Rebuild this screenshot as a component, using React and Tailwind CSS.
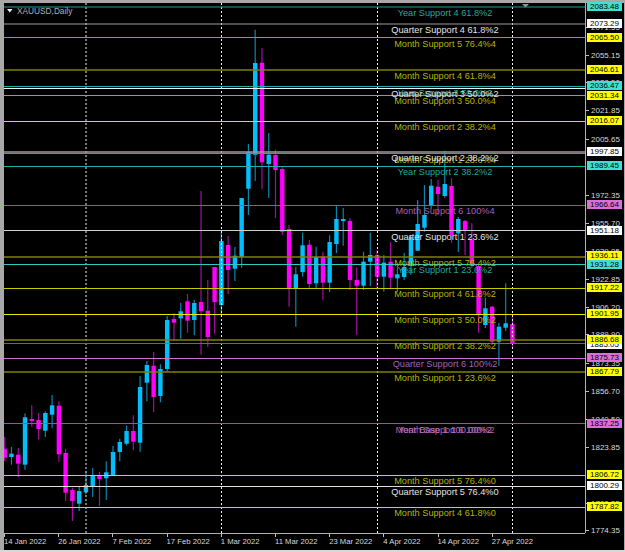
const CANDLES = [
  // body top, body bottom, wick top, wick bottom, rising
  [448.7, 457.7, 437, 461.3, 0],
  [453.7, 457, 447, 464.7, 1],
  [454.7, 463.7, 448, 477.3, 0],
  [417.3, 464.7, 413.3, 469.7, 1],
  [419, 421, 405.3, 426.7, 0],
  [420, 429, 413, 439.3, 0],
  [413, 430.7, 411.3, 437, 1],
  [405.3, 414.7, 395, 428.3, 1],
  [405.7, 454.3, 401.3, 461.7, 0],
  [453, 492.7, 448.7, 500.7, 0],
  [490, 501, 487.7, 521, 0],
  [491, 503.7, 486.7, 511, 1],
  [485, 492.3, 471, 494.3, 1],
  [475.3, 486, 468, 497, 1],
  [475.3, 479, 471.7, 506, 0],
  [472.3, 478.3, 461.3, 500, 1],
  [452, 475.3, 446, 475.3, 1],
  [442, 452, 438.7, 461.3, 1],
  [431, 443.7, 425.7, 445.3, 1],
  [431, 441.7, 415.3, 450.3, 0],
  [387, 442.7, 376, 451.7, 1],
  [365, 382.7, 361, 401.3, 1],
  [365.7, 397, 352, 412, 0],
  [369, 396, 364.3, 402.3, 1],
  [320, 369, 316, 371.7, 1],
  [319, 322.7, 313.3, 340.7, 0],
  [311.3, 318.3, 303, 338.7, 1],
  [301.3, 320.7, 294, 332.7, 0],
  [303, 320, 299.7, 335.3, 1],
  [302, 311.3, 191, 354.7, 0],
  [310.7, 337, 280, 347, 0],
  [267, 302, 267, 333.7, 0],
  [241, 305, 231.7, 315, 1],
  [245, 270, 236, 294, 0],
  [255.7, 268.7, 247, 281, 1],
  [198, 257, 198, 267.7, 1],
  [152, 188.7, 144, 215, 1],
  [63, 154.7, 29.7, 181, 1],
  [62.7, 162.3, 48, 189, 0],
  [154.7, 164, 133, 198, 1],
  [155, 170, 149.7, 218, 0],
  [169, 231.7, 166.7, 235, 0],
  [229, 288, 225, 306.7, 0],
  [274.3, 288, 267, 326.7, 1],
  [245.3, 272, 232.7, 276.7, 1],
  [244.7, 284, 240, 288, 0],
  [257, 283.3, 246.7, 289, 1],
  [256.7, 282.7, 252, 300, 0],
  [242, 282.7, 235.3, 292, 1],
  [219, 244, 206, 253, 1],
  [219, 221, 208, 245.7, 1],
  [221, 280, 218, 290, 0],
  [280, 285.7, 267.3, 335, 0],
  [261.7, 285.7, 251.7, 290, 1],
  [255, 261.7, 232.7, 286, 1],
  [255, 276.7, 250, 289.3, 0],
  [262.7, 276.7, 255, 291.7, 1],
  [261.7, 277.7, 242.3, 289.3, 0],
  [274.3, 278.3, 265, 292, 1],
  [267, 277, 253, 280, 1],
  [237, 266, 235, 275, 1],
  [224, 250.7, 200, 250.7, 1],
  [215, 227.7, 185, 231.7, 1],
  [185.7, 205, 179, 209, 1],
  [186.7, 194, 180, 215, 0],
  [184, 196, 150.7, 198, 1],
  [186, 235, 178.3, 243, 0],
  [219, 233.3, 217, 252, 1],
  [221, 230.7, 220, 255, 0],
  [240, 266, 223.3, 268, 0],
  [266, 315, 265, 332.7, 0],
  [308.3, 325, 297.7, 328, 1],
  [306.7, 341.7, 306, 343, 0],
  [326.7, 341.7, 322.7, 365.7, 1],
  [323.3, 327.7, 283.3, 331, 1],
  [324, 343.3, 317.3, 347, 0],
];

const LINES = [
  [7, "#1f9d95"],
  [24, "#9a9a9a"],
  [37.5, "#a0a000"],
  [70, "#808000", 1.5],
  [86.5, "#20b2aa"],
  [88.5, "#f0f0f0"],
  [95.5, "#a8a800"],
  [121.5, "#e0e000"],
  [152, "#9a9a9a", 1.5],
  [153.5, "#909000"],
  [166.5, "#20b2aa"],
  [205.5, "#a050a0"],
  [230.5, "#cfcfcf"],
  [257, "#808000", 1.5],
  [264.5, "#30c8c0"],
  [288.5, "#c8c800"],
  [314.5, "#e8e800"],
  [340, "#808000", 1.5],
  [343.5, "#6a6a6a"],
  [358.5, "#d070d0"],
  [372, "#808000", 1.5],
  [423.5, "#a050a0"],
  [475.5, "#d8d800"],
  [486.5, "#dcdcdc"],
  [507.5, "#d8d800"],
];

const YELLOW = "#b4b400";
const WHITE = "#e4e4e4";
const TEAL = "#22a89f";
const ORCHID = "#a860b0";

const CHART_TEXT = [
  ["Year Support 4 61.8%2", 12.7, TEAL],
  ["Quarter Support 4 61.8%2", 29.3, WHITE],
  ["Month Support 5 76.4%4", 43.3, YELLOW],
  ["Month Support 4 61.8%4", 75.7, YELLOW],
  ["Year Support 3 50.0%2", 92.3, TEAL],
  ["Quarter Support 3 50.0%2", 94, WHITE],
  ["Month Support 3 50.0%4", 100.7, YELLOW],
  ["Month Support 2 38.2%4", 127, YELLOW],
  ["Month Support 1 23.6%4", 159.7, YELLOW],
  ["Quarter Support 2 38.2%2", 157.3, WHITE],
  ["Year Support 2 38.2%2", 172, TEAL],
  ["Month Support 6 100%4", 210.7, ORCHID],
  ["Quarter Support 1 23.6%2", 236.3, WHITE],
  ["Month Support 5 76.4%2", 262.3, YELLOW],
  ["Year Support 1 23.6%2", 270, TEAL],
  ["Month Support 4 61.8%2", 293.7, YELLOW],
  ["Month Support 3 50.0%2", 319.7, YELLOW],
  ["Month Support 2 38.2%2", 345.3, YELLOW],
  ["Quarter Support 6 100%2", 364, ORCHID],
  ["Month Support 1 23.6%2", 377.7, YELLOW],
  ["Month Support 6 100%2", 429.3, ORCHID],
  ["Year Base 1 100.00%2", 429.3, "#c070c0"],
  ["Month Support 5 76.4%0", 480.7, YELLOW],
  ["Quarter Support 5 76.4%0", 491.7, WHITE],
  ["Month Support 4 61.8%0", 513, YELLOW],
];

const SCALE = [
  ["2071.55", 27],
  ["2055.15", 55.3],
  ["2038.50", 82],
  ["2021.85", 110.7],
  ["2005.65", 139],
  ["1972.35", 195],
  ["1955.70", 223],
  ["1939.05", 251],
  ["1922.85", 279],
  ["1906.20", 307],
  ["1889.90", 334.5],
  ["1873.35", 363],
  ["1856.70", 391],
  ["1840.50", 419],
  ["1823.85", 447],
  ["1790.55", 503],
  ["1774.35", 530],
];

const TAGS = [
  ["2083.48", 6.7, "bg-[#40e0d0]"],
  ["2073.29", 23.3, "bg-white"],
  ["2065.50", 37, "bg-[#ffff00]"],
  ["2046.61", 69, "bg-[#ffff00]"],
  ["2031.34", 95, "bg-[#ffff00]"],
  ["2036.47", 85.7, "bg-[#40e0d0]"],
  ["2016.07", 120.7, "bg-[#ffff00]"],
  ["1997.85", 151.3, "bg-white"],
  ["1989.45", 165.3, "bg-[#40e0d0]"],
  ["1966.64", 204.7, "bg-[#da70d6]"],
  ["1951.18", 230, "bg-white"],
  ["1931.28", 264, "bg-[#40e0d0]"],
  ["1936.11", 255.3, "bg-[#ffff00]"],
  ["1917.22", 287.7, "bg-[#ffff00]"],
  ["1901.95", 313.7, "bg-[#ffff00]"],
  ["1885.05", 344, "bg-white"],
  ["1886.68", 339.5, "bg-[#ffff00]"],
  ["1875.73", 357.7, "bg-[#da70d6]"],
  ["1867.79", 371, "bg-[#ffff00]"],
  ["1837.25", 423, "bg-[#da70d6]"],
  ["1806.72", 474.7, "bg-[#ffff00]"],
  ["1800.29", 485.7, "bg-white"],
  ["1787.82", 506.3, "bg-[#ffff00]"],
];

const DATES = [
  "14 Jan 2022",
  "26 Jan 2022",
  "7 Feb 2022",
  "17 Feb 2022",
  "1 Mar 2022",
  "11 Mar 2022",
  "23 Mar 2022",
  "4 Apr 2022",
  "14 Apr 2022",
  "27 Apr 2022",
];

const candleX = (i) => 4.7 + i * 6.77;

const Plot = () => (
  <svg
    viewBox="4 3 581 530"
    className="w-[581px] h-[530px] shrink-0 block"
    fontFamily="'Liberation Sans', sans-serif"
  >
    {CANDLES.map(([bt, bb, wt, wb, up], i) => {
      const x = candleX(i);
      return (
        <g key={i}>
          <line x1={x} x2={x} y1={wt} y2={wb} stroke={up ? "#0a86ad" : "#a010a0"} strokeWidth="1.2" />
          <rect x={x - 2.2} y={bt} width={4.4} height={bb - bt} fill={up ? "#00bfff" : "#ff00ff"} />
        </g>
      );
    })}

    {/* period separators */}
    <line x1="86" x2="86" y1="3" y2="533" stroke="#a0a0a0" strokeWidth="1.5" strokeDasharray="2 2" />
    {[221.5, 377.5, 512.5].map((x) => (
      <line key={x} x1={x} x2={x} y1="3" y2="533" stroke="#f0f0f0" strokeDasharray="2 2" />
    ))}

    {LINES.map(([y, color, width]) => (
      <line key={y} x1="4" x2="585" y1={y} y2={y} stroke={color} strokeWidth={width || 1} />
    ))}

    {CHART_TEXT.map(([label, y, color]) => (
      <text key={label} x="445" y={y + 3.2} textAnchor="middle" fontSize="9.2" fill={color}>
        {label}
      </text>
    ))}

    <path d="M7 9h5.5l-2.7 3.5z" fill="#f2f2f2" />
    <text x="17" y="14" fontSize="8.3" fill="#b0b0b0">XAUUSD,Daily</text>
    <path d="M522 4h7l-3.5 3.5z" fill="#8a97a5" />
  </svg>
);

const PriceAxis = () => (
  <div className="relative w-[36px] h-[530px] border-l border-[#b0b0b0] text-[8px] leading-[9px]">
    {SCALE.map(([price, y]) => (
      <div key={price} className="absolute left-0 flex items-center" style={{ top: y - 7.5 }}>
        <span className="w-[3px] h-px bg-[#c0c0c0] mr-[2px]" />
        <span className="text-[#d8d8d8]">{price}</span>
      </div>
    ))}
    {TAGS.map(([price, y, bg]) => (
      <div
        key={price}
        className={`absolute left-px w-[35px] h-[9px] text-center text-black ${bg}`}
        style={{ top: y - 7.5 }}
      >
        {price}
      </div>
    ))}
  </div>
);

const TimeAxis = () => (
  <div className="w-[581px] h-[17px] border-t border-[#b0b0b0] flex text-[7.7px] text-[#d8d8d8]">
    {DATES.map((date) => (
      <div key={date} className="relative w-[54.2px] shrink-0 pt-[2px] whitespace-nowrap">
        <span className="absolute left-0 top-0 w-px h-[3px] bg-[#c0c0c0]" />
        {date}
      </div>
    ))}
  </div>
);

export default function App() {
  return (
    <div className="w-[625px] h-[552px] overflow-hidden bg-[#d8d8d8] font-['Liberation_Sans',sans-serif]">
      <div className="w-[625px] h-[550px] bg-black box-border border-t-[3px] border-l-[4px] border-r border-[#a8a8a8] flex flex-col">
        <div className="flex w-[620px]">
          <Plot />
          <PriceAxis />
        </div>
        <TimeAxis />
      </div>
    </div>
  );
}
